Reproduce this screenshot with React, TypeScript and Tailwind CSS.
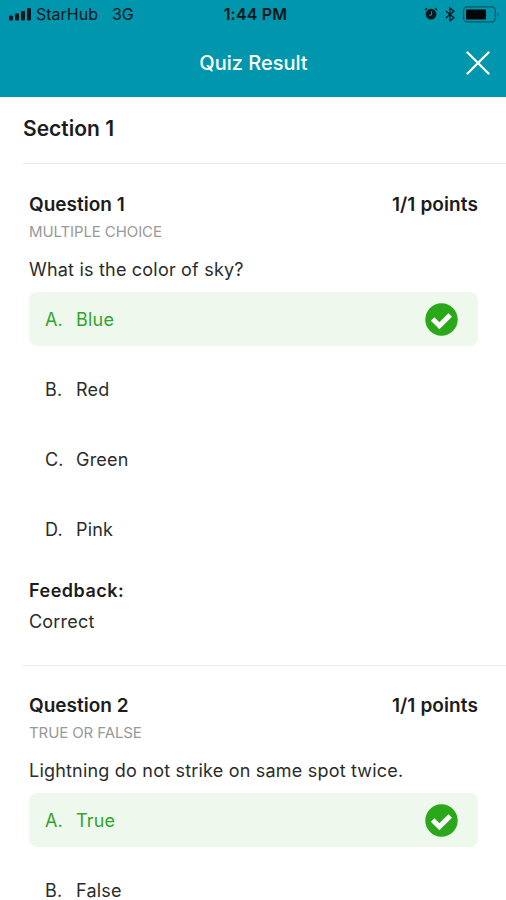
import React from "react";

interface Option {
  letter: string;
  label: string;
  correct?: boolean;
}

interface Question {
  id: number;
  type: string;
  text: string;
  points: string;
  options: Option[];
  feedback?: string;
}

const questions: Question[] = [
  {
    id: 1,
    type: "MULTIPLE CHOICE",
    text: "What is the color of sky?",
    points: "1/1 points",
    options: [
      { letter: "A.", label: "Blue", correct: true },
      { letter: "B.", label: "Red" },
      { letter: "C.", label: "Green" },
      { letter: "D.", label: "Pink" },
    ],
    feedback: "Correct",
  },
  {
    id: 2,
    type: "TRUE OR FALSE",
    text: "Lightning do not strike on same spot twice.",
    points: "1/1 points",
    options: [
      { letter: "A.", label: "True", correct: true },
      { letter: "B.", label: "False" },
    ],
  },
];

function SignalIcon() {
  return (
    <svg width="22" height="14" viewBox="0 0 22 14" fill="#04181c">
      <rect x="0" y="8.5" width="4" height="5" rx="1" />
      <rect x="6" y="6.5" width="4" height="7" rx="1" />
      <rect x="12" y="4" width="4" height="9.5" rx="1" />
      <rect x="18" y="1" width="4" height="12.5" rx="1" />
    </svg>
  );
}

function AlarmIcon() {
  return (
    <svg width="14" height="14" viewBox="0 0 14 14" fill="none" stroke="#04181c" strokeLinecap="round">
      <circle cx="7" cy="7.2" r="5.4" fill="#04181c" stroke="none" />
      <path d="M1.4 2.8 2.6 1.6M12.6 2.8 11.4 1.6" strokeWidth="1.4" />
      <path d="M7.6 4.6V7.6L5.6 8.4" stroke="#0096ad" strokeWidth="1.1" />
    </svg>
  );
}

function BluetoothIcon() {
  return (
    <svg width="10" height="15" viewBox="0 0 10 15" fill="none" stroke="#04181c" strokeWidth="1.2">
      <path d="M.8 4 9 10.8 5 14V1L9 4.2.8 11" />
    </svg>
  );
}

function BatteryIcon() {
  return (
    <svg width="37" height="17" viewBox="0 0 37 17">
      <rect x=".6" y=".9" width="31.6" height="15" rx="3.6" fill="none" stroke="#045866" strokeWidth="1.1" />
      <rect x="3" y="3.6" width="20" height="9.8" rx="1" fill="#020607" />
      <path d="M34.2 6.4c1.8.6 1.8 3.6 0 4.2z" fill="#045866" />
    </svg>
  );
}

function CheckBadge() {
  return (
    <svg width="33" height="33" viewBox="0 0 33 33">
      <circle cx="16.5" cy="16.5" r="16.2" fill="#2aa81a" />
      <path d="M7.6 16 14.4 22.8 25.2 12" fill="none" stroke="#fff" strokeWidth="5" />
    </svg>
  );
}

function OptionRow({ option }: { option: Option }) {
  return (
    <div
      className={
        option.correct
          ? "flex h-[54px] items-center rounded-lg bg-[#eff8ec] pl-4 pr-5 leading-4 text-[#2fa52c]"
          : "flex h-[54px] items-center pl-4 pr-5 leading-4 text-[#2b2b2b]"
      }
    >
      <span className="w-[31px] pt-0.5">{option.letter}</span>
      <span className="flex-1 pt-0.5">{option.label}</span>
      {option.correct && <CheckBadge />}
    </div>
  );
}

function QuestionBlock({ question }: { question: Question }) {
  return (
    <section className="ml-[23px] h-[502px] border-t border-[#ebebeb] pl-[6px] pr-7 pt-[28px] text-[18px] leading-6 tracking-[0.2px] text-[#2b2b2b] first-of-type:pt-[29px]">
      <div className="flex justify-between text-[19px] font-semibold tracking-[0px] text-[#1c1c1c]">
        <h3>Question {question.id}</h3>
        <span className="tracking-[0.1px]">{question.points}</span>
      </div>
      <p className="mt-[5px] text-[15px] leading-5 tracking-[-0.1px] text-[#999]">{question.type}</p>
      <p className="mt-4">{question.text}</p>
      <div className="mt-2.5 flex flex-col gap-4">
        {question.options.map((option) => (
          <OptionRow key={option.letter} option={option} />
        ))}
      </div>
      {question.feedback && (
        <div className="mt-[23px]">
          <p className="font-semibold tracking-[0.5px] text-[#1c1c1c]">Feedback:</p>
          <p className="mt-[7px]">{question.feedback}</p>
        </div>
      )}
    </section>
  );
}

export default function App() {
  return (
    <div className="h-[900px] w-[506px] overflow-hidden bg-white font-['Inter',sans-serif]">
      <header className="h-[97px] bg-[#0096ad]">
        <div className="grid h-[28px] grid-cols-3 items-center pl-[9px] pr-[6px] text-[16px] text-[#04181c]">
          <div className="flex items-center">
            <SignalIcon />
            <span className="ml-[5px]">StarHub</span>
            <span className="ml-[14px]">3G</span>
          </div>
          <span className="pl-0.5 text-center font-semibold tracking-[0.2px]">1:44 PM</span>
          <div className="flex items-center justify-end">
            <AlarmIcon />
            <span className="ml-[7px] mr-[8px]">
              <BluetoothIcon />
            </span>
            <BatteryIcon />
          </div>
        </div>
        <div className="grid h-[69px] grid-cols-[1fr_auto_1fr] items-center pl-[17px] pr-4">
          <h1 className="col-start-2 text-[20px] font-medium text-white">Quiz Result</h1>
          <button type="button" aria-label="Close" className="justify-self-end">
            <svg width="24" height="24" viewBox="0 0 24 24" fill="none" stroke="#fff" strokeWidth="2.3" strokeLinecap="round">
              <path d="M1.5 1.5 22.5 22.5M22.5 1.5 1.5 22.5" />
            </svg>
          </button>
        </div>
      </header>
      <main>
        <h2 className="flex h-[66px] items-center pb-[3px] pl-[23px] text-[21px] font-semibold text-[#1c1c1c]">Section 1</h2>
        {questions.map((question) => (
          <QuestionBlock key={question.id} question={question} />
        ))}
      </main>
    </div>
  );
}
